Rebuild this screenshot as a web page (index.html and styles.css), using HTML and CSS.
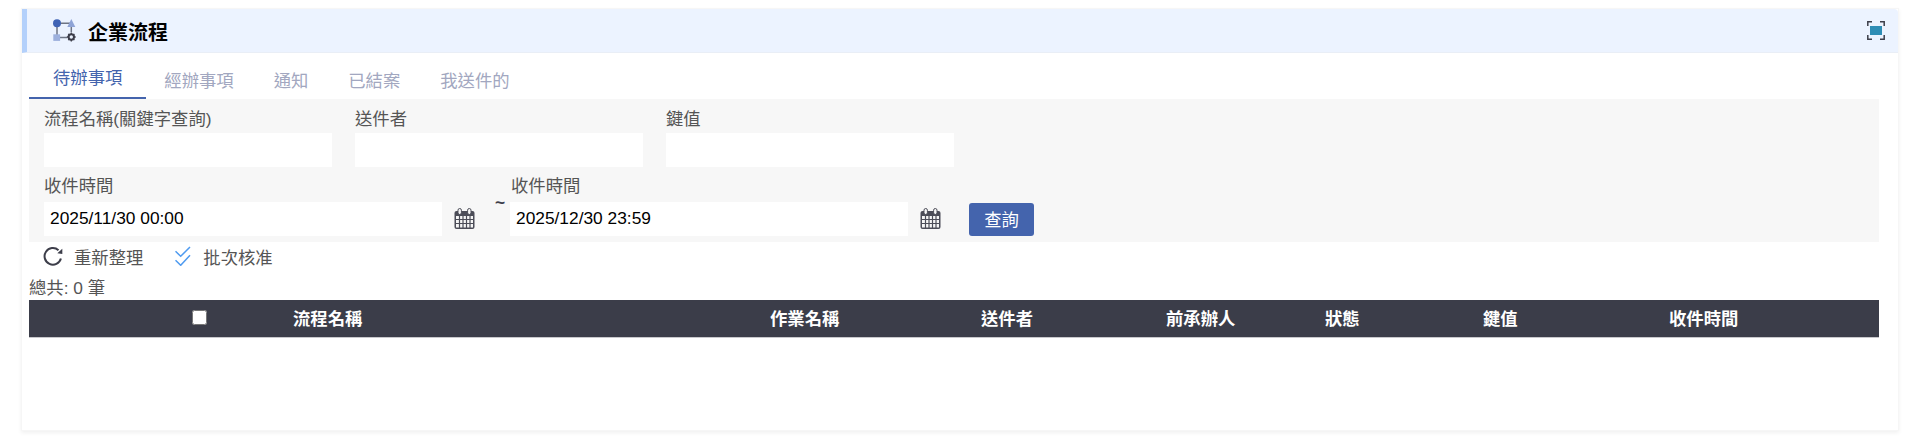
FILE: index.html
```html
<!DOCTYPE html>
<html lang="zh-Hant">
<head>
    <meta charset="UTF-8">
    <meta name="viewport" content="width=device-width, initial-scale=1.0">
    <title>企業流程</title>
    <link rel="stylesheet" href="styles.css">
</head>
<body>

    <svg class="defs" width="0" height="0">
        <symbol id="calendar" viewBox="0 0 21 21">
            <rect x="0.5" y="3" width="20" height="18" rx="2" fill="#4c4d58"/>
            <rect x="2" y="8" width="17" height="11.5" fill="#f6f6f6"/>
            <path d="M5.5 8v12M9 8v12M12.5 8v12M16 8v12M2 11.5h17M2 15.5h17" stroke="#4c4d58" stroke-width="1.2"/>
            <rect x="4" y="0.5" width="3.4" height="6" rx="1.7" fill="#f6f6f6" stroke="#4c4d58"/>
            <rect x="13.6" y="0.5" width="3.4" height="6" rx="1.7" fill="#f6f6f6" stroke="#4c4d58"/>
        </symbol>
    </svg>

    <div class="card">

        <header class="band">
            <svg class="flow-icon" width="23" height="23" viewBox="0 0 23 23">
                <path d="M4 4.3H18M4 4.3V16M7 18.5H14M18.3 8V13" stroke="#6d7484" stroke-width="1.5" fill="none"/>
                <circle cx="4" cy="4.3" r="4" fill="#3f63b5"/>
                <path d="M18.3 0l4 8h-8z" fill="#8ea3d6"/>
                <rect x="0.3" y="15.3" width="6.8" height="6.6" fill="#9db0dd"/>
                <circle cx="18.3" cy="18" r="2.7" fill="none" stroke="#3d3e4a" stroke-width="2"/>
                <path d="M18.3 13.6v1.6M18.3 20.8v1.6M13.9 18h1.6M21.1 18h1.6M15.2 14.9l1.1 1.1M20.3 20l1.1 1.1M15.2 21.1l1.1-1.1M20.3 16l1.1-1.1" stroke="#3d3e4a" stroke-width="1.3"/>
            </svg>
            <h1 class="band-title">企業流程</h1>
            <svg class="expand-icon" width="18" height="19" viewBox="0 0 18 19">
                <path d="M0.8 5V0.8H5M13 0.8h4.2V5M0.8 14v4.2H5M13 18.2h4.2V14" fill="none" stroke="#3d3e4a" stroke-width="1.5"/>
                <rect x="3" y="5" width="12" height="9" fill="#2e8db5"/>
            </svg>
        </header>

        <div class="content">

            <nav class="tabs">
                <a class="tab active">待辦事項</a>
                <a class="tab">經辦事項</a>
                <a class="tab">通知</a>
                <a class="tab">已結案</a>
                <a class="tab">我送件的</a>
            </nav>

            <section class="filter">
                <div class="filter-row">
                    <div class="field">
                        <label>流程名稱(關鍵字查詢)</label>
                        <input class="input" type="text">
                    </div>
                    <div class="field">
                        <label>送件者</label>
                        <input class="input" type="text">
                    </div>
                    <div class="field">
                        <label>鍵值</label>
                        <input class="input" type="text">
                    </div>
                </div>
                <div class="filter-row date-row">
                    <div class="field">
                        <label>收件時間</label>
                        <input class="input date-input" type="text" value="2025/11/30 00:00">
                    </div>
                    <svg class="calendar" width="21" height="21"><use href="#calendar"/></svg>
                    <span class="tilde">~</span>
                    <div class="field field-end">
                        <label>收件時間</label>
                        <input class="input date-input" type="text" value="2025/12/30 23:59">
                    </div>
                    <svg class="calendar" width="21" height="21"><use href="#calendar"/></svg>
                    <button class="btn-search">查詢</button>
                </div>
            </section>

            <div class="toolbar">
                <a class="tool tool-refresh">
                    <svg width="20" height="20" viewBox="0 0 20 20">
                        <path d="M15.5 4.2A8.3 8.3 0 1 0 17.9 12.5" fill="none" stroke="#3d3e4a" stroke-width="2"/>
                        <path d="M19.3 2.7V8l-5-.7z" fill="#3d3e4a"/>
                    </svg>
                    重新整理
                </a>
                <a class="tool tool-approve">
                    <svg width="16" height="20" viewBox="0 0 16 20">
                        <path d="M0.5 5.3l5.2 5L15 1M0.5 14.3l5.2 5L15 9.3" fill="none" stroke="#4f9bf0" stroke-width="1.5"/>
                    </svg>
                    批次核准
                </a>
            </div>

            <div class="total">總共: 0 筆</div>

            <table class="grid">
                <colgroup>
                    <col class="col-check">
                    <col class="col-flow">
                    <col class="col-job">
                    <col class="col-sender">
                    <col class="col-prev">
                    <col class="col-status">
                    <col class="col-key">
                    <col class="col-time">
                </colgroup>
                <thead>
                    <tr>
                        <th class="th-check"><input type="checkbox"></th>
                        <th>流程名稱</th>
                        <th>作業名稱</th>
                        <th>送件者</th>
                        <th>前承辦人</th>
                        <th>狀態</th>
                        <th>鍵值</th>
                        <th>收件時間</th>
                    </tr>
                </thead>
            </table>

        </div>
    </div>

</body>
</html>
```

FILE: styles.css
```css
* {
    box-sizing: border-box;
}

body {
    margin: 0;
    padding: 8px 12px 9px 21px;
    background: #fff;
    font-family: "Liberation Sans", "Noto Sans CJK TC", sans-serif;
    font-size: 13pt;
    color: #555;
}

.defs {
    position: absolute;
}

.card {
    height: 423px;
    border: 1px solid #f6f6f6;
    box-shadow: 0 2px 4px rgba(0, 0, 0, 0.06);
    background: #fff;
}

.band {
    display: flex;
    align-items: center;
    height: 44px;
    padding: 0 13px 0 26px;
    border-left: 5px solid #b3d0fb;
    border-bottom: 1px solid #e9eef6;
    border-top-right-radius: 4px;
    background: #ecf3ff;
}

.band-title {
    margin: 2px 0 0 12px;
    font-size: 15pt;
    font-weight: 700;
    color: #000;
}

.expand-icon {
    margin-left: auto;
}

.content {
    padding: 0 19px 0 7px;
}

.tabs {
    display: flex;
    height: 46px;
}

.tab {
    display: flex;
    align-items: center;
    height: 46px;
    padding: 11px 20px 0;
    color: #a2a7c0;
    line-height: 1;
}

.tab.active {
    padding: 8px 24px 0;
    margin-right: -2px;
    border-bottom: 2px solid #4464ad;
    color: #4464ad;
}

.filter {
    height: 143px;
    padding: 3px 0 0 15px;
    background: #f7f7f7;
}

.filter-row {
    display: flex;
    gap: 23px;
}

.field label {
    display: block;
    height: 31px;
    padding-top: 2px;
    line-height: 31px;
}

.input {
    display: block;
    width: 288px;
    height: 34px;
    padding: 0 6px 2px;
    border: 0;
    outline: 0;
    background: #fff;
    font: inherit;
    color: #000;
}

.date-row {
    gap: 0;
    margin-top: 4px;
}

.date-row .field label {
    padding-top: 0;
}

.date-input {
    width: 398px;
}

.calendar {
    margin: 37px 0 0 12px;
}

.tilde {
    width: 10px;
    margin: 19px 5px 0 20px;
    line-height: 24px;
    font-weight: 700;
    color: #3d3e4a;
}

.date-row .field-end label {
    padding-left: 1px;
}

.btn-search {
    width: 65px;
    height: 33px;
    margin: 32px 0 0 28px;
    padding: 0 0 3px;
    border: 0;
    border-radius: 3px;
    background: #4464ad;
    color: #fff;
    font: inherit;
}

.toolbar {
    display: flex;
    height: 30px;
    padding-left: 14px;
    padding-bottom: 2px;
    gap: 32px;
}

.tool {
    display: flex;
    align-items: center;
    gap: 11px;
}

.tool-approve {
    gap: 12px;
}

.total {
    height: 28px;
    line-height: 32px;
}

.grid {
    width: 100%;
    border-collapse: separate;
    border-spacing: 0;
    table-layout: fixed;
}

.col-check { width: 264px; }
.col-flow { width: 477px; }
.col-job { width: 211px; }
.col-sender { width: 185px; }
.col-prev { width: 159px; }
.col-status { width: 158px; }
.col-key { width: 186px; }

.grid th {
    height: 38px;
    padding: 0 0 3px;
    border-bottom: 1px solid #c8c8cc;
    background: #3b3d49;
    color: #fff;
    font-weight: 700;
    text-align: left;
}

.grid th.th-check {
    padding-left: 163px;
}

.th-check input {
    display: block;
    width: 15px;
    height: 15px;
    margin: 0;
}
```
